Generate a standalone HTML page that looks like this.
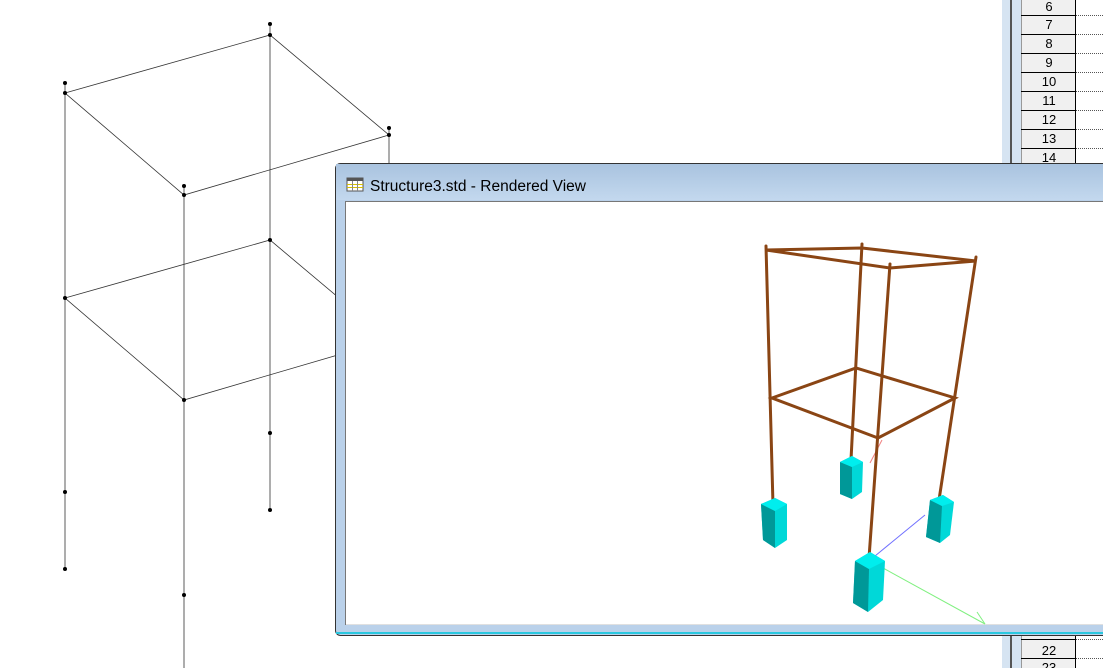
<!DOCTYPE html><html><head><style>body{margin:0;width:1103px;height:668px;overflow:hidden;background:#fff;font-family:"Liberation Sans",sans-serif}</style></head><body>
<svg width="1103" height="668" xmlns="http://www.w3.org/2000/svg" style="position:absolute;left:0;top:0">
<defs><linearGradient id="tb" x1="0" y1="0" x2="0" y2="1"><stop offset="0" stop-color="#a9c3df"/><stop offset="1" stop-color="#c3d8ee"/></linearGradient></defs>
<rect x="1000" y="0" width="103" height="668" fill="#fff"/>
<rect x="1002" y="0" width="9" height="668" fill="#d6e4f2"/>
<rect x="1010" y="0" width="2" height="668" fill="#555"/>
<rect x="1012" y="0" width="9" height="668" fill="#d6e4f2"/>
<rect x="1021" y="0" width="55" height="668" fill="#f0f0f0"/>
<line x1="1021.5" y1="0" x2="1021.5" y2="668" stroke="#999"/>
<line x1="1075.5" y1="0" x2="1075.5" y2="668" stroke="#000"/>
<g stroke="#000" stroke-width="1">
<line x1="1021" y1="15.5" x2="1076" y2="15.5"/><line x1="1021" y1="34.5" x2="1076" y2="34.5"/><line x1="1021" y1="53.5" x2="1076" y2="53.5"/><line x1="1021" y1="72.5" x2="1076" y2="72.5"/><line x1="1021" y1="91.5" x2="1076" y2="91.5"/><line x1="1021" y1="110.5" x2="1076" y2="110.5"/><line x1="1021" y1="129.5" x2="1076" y2="129.5"/><line x1="1021" y1="148.5" x2="1076" y2="148.5"/>
<line x1="1021" y1="639.5" x2="1076" y2="639.5"/><line x1="1021" y1="658.5" x2="1076" y2="658.5"/></g>
<g stroke="#555" stroke-dasharray="1,1"><line x1="1076" y1="15.5" x2="1103" y2="15.5"/><line x1="1076" y1="34.5" x2="1103" y2="34.5"/><line x1="1076" y1="53.5" x2="1103" y2="53.5"/><line x1="1076" y1="72.5" x2="1103" y2="72.5"/><line x1="1076" y1="91.5" x2="1103" y2="91.5"/><line x1="1076" y1="110.5" x2="1103" y2="110.5"/><line x1="1076" y1="129.5" x2="1103" y2="129.5"/><line x1="1076" y1="148.5" x2="1103" y2="148.5"/><line x1="1076" y1="639.5" x2="1103" y2="639.5"/><line x1="1076" y1="658.5" x2="1103" y2="658.5"/></g>
<g font-size="13" text-anchor="middle" fill="#000" font-family="Liberation Sans">
<text x="1049" y="11">6</text><text x="1049" y="29">7</text><text x="1049" y="48">8</text><text x="1049" y="67">9</text><text x="1049" y="86">10</text><text x="1049" y="105">11</text><text x="1049" y="124">12</text><text x="1049" y="143">13</text><text x="1049" y="162">14</text><text x="1049" y="655">22</text><text x="1049" y="672">23</text></g>
<g stroke="#333" stroke-width="0.8" fill="none">
<path d="M65 93 L270 35 L389 135 L184 195 Z"/>
<path d="M65 298 L270 240 L389 340 L184 400 Z"/>
<path d="M65 83 V569 M270 24 V510 M389 128 V340 M184 186 V668"/>
</g>
<g fill="#000">
<circle cx="65" cy="83" r="2"/><circle cx="65" cy="93" r="2"/><circle cx="270" cy="24" r="2"/><circle cx="270" cy="35" r="2"/><circle cx="389" cy="128" r="2"/><circle cx="389" cy="135" r="2"/><circle cx="184" cy="186" r="2"/><circle cx="184" cy="195" r="2"/>
<circle cx="65" cy="298" r="2"/><circle cx="270" cy="240" r="2"/><circle cx="184" cy="400" r="2"/>
<circle cx="65" cy="492" r="2"/><circle cx="65" cy="569" r="2"/><circle cx="270" cy="433" r="2"/><circle cx="270" cy="510" r="2"/><circle cx="184" cy="595" r="2"/></g>
<rect x="335.5" y="163.5" width="780" height="472" rx="5" fill="#bad1ea" stroke="#333"/>
<rect x="336" y="164" width="770" height="36" fill="url(#tb)"/>
<rect x="336" y="632" width="770" height="2" fill="#2ac8e0"/>
<rect x="345" y="201" width="760" height="424" fill="#e0e0e0"/>
<rect x="346" y="202" width="760" height="422" fill="#fff"/>
<line x1="345.5" y1="201" x2="345.5" y2="625" stroke="#777"/>
<line x1="345" y1="201.5" x2="1103" y2="201.5" stroke="#777"/>
<g transform="translate(347,178)"><rect x="0" y="0" width="16" height="13" fill="#fff" stroke="#555"/><rect x="0" y="0" width="16" height="3" fill="#555"/><line x1="0" y1="6.5" x2="16" y2="6.5" stroke="#d8c000"/><line x1="0" y1="9.5" x2="16" y2="9.5" stroke="#d8c000"/><line x1="5.5" y1="3" x2="5.5" y2="13" stroke="#888"/><line x1="10.5" y1="3" x2="10.5" y2="13" stroke="#888"/></g>
<text x="370" y="191" font-size="15.5" fill="#000" font-family="Liberation Sans">Structure3.std - Rendered View</text>
<line x1="875" y1="556" x2="925" y2="515" stroke="#7070ff"/>
<line x1="883" y1="568" x2="985" y2="624" stroke="#80f080"/>
<line x1="977" y1="612" x2="985" y2="624" stroke="#80f080"/>
<line x1="870" y1="463" x2="882" y2="440" stroke="#f08080"/>
<g stroke="#8a4514" stroke-width="3" stroke-linecap="round" fill="none">
<path d="M766 250 L862 248 L976 261 L890 268 Z"/>
<path d="M772 398 L856 368 L955 398 L878 438 Z"/>
<path d="M766 246 L773 505 M862 244 L851 460 M976 257 L939 500 M890 264 L869 558"/>
</g>
<g>
<path d="M761 504 L775 498 L787 504 L787 540 L775 548 L763 540 Z" fill="#00d8d8"/><path d="M761 504 L775 511 L775 548 L763 540 Z" fill="#009898"/><path d="M761 504 L775 498 L787 504 L775 511 Z" fill="#00eeee"/>
<path d="M840 462 L852 456 L863 462 L862 492 L852 499 L840 494 Z" fill="#00d8d8"/><path d="M840 462 L852 467 L852 499 L840 494 Z" fill="#009898"/><path d="M840 462 L852 456 L863 462 L852 467 Z" fill="#00eeee"/>
<path d="M930 500 L943 495 L954 502 L950 535 L940 543 L926 537 Z" fill="#00d8d8"/><path d="M930 500 L942 506 L940 543 L926 537 Z" fill="#009898"/><path d="M930 500 L943 495 L954 502 L942 506 Z" fill="#00eeee"/>
<path d="M855 561 L870 552 L885 561 L883 600 L868 612 L853 603 Z" fill="#00d8d8"/><path d="M855 561 L869 569 L868 612 L853 603 Z" fill="#009898"/><path d="M855 561 L870 552 L885 561 L869 569 Z" fill="#00eeee"/>
</g>
</svg>
</body></html>
